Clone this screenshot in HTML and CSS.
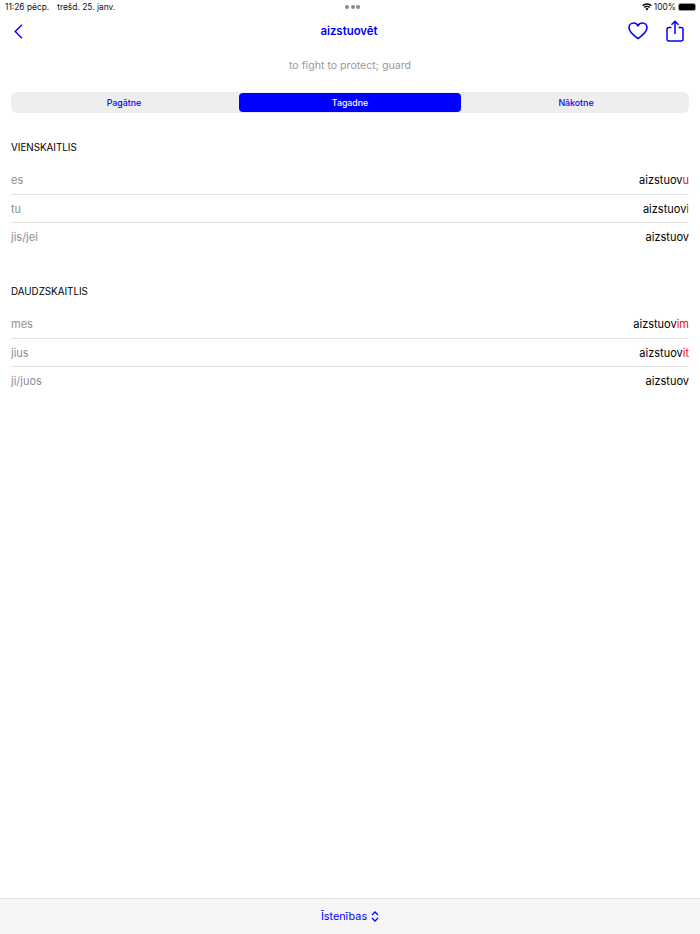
FILE: index.html
```html
<!DOCTYPE html>
<html lang="lv">
<head>
    <meta charset="UTF-8">
    <meta name="viewport" content="width=device-width, initial-scale=1.0">
    <title>aizstuovēt</title>
    <link rel="stylesheet" href="styles.css">
</head>
<body>
    <div class="status-bar">
        <div class="status-left"><span>11:26 pēcp.</span><span>trešd. 25. janv.</span></div>
        <div class="status-dots"><i></i><i></i><i></i></div>
        <div class="status-right">
            <svg class="wifi" viewBox="0 0 12 9" width="10" height="8">
                <path d="M6 8.600 4.200 6.700a2.600 2.600 0 0 1 3.600 0z" fill="#000"/>
                <path d="M3.300 5.800 2.200 4.600a5.400 5.400 0 0 1 7.600 0L8.700 5.800a3.900 3.900 0 0 0-5.400 0z" fill="#000"/>
                <path d="M1.300 3.700.2 2.500a8.200 8.200 0 0 1 11.600 0l-1.100 1.200a6.700 6.700 0 0 0-9.400 0z" fill="#000"/>
            </svg>
            <span>100%</span>
            <div class="battery"><div class="battery-level"></div></div>
        </div>
    </div>

    <div class="nav-bar">
        <svg class="nav-back" viewBox="0 0 9 15" width="9" height="15">
            <path d="M8 .8 1.200 7.500 8 14.200" fill="none" stroke="#0000ff" stroke-width="1.400"/>
        </svg>
        <div class="nav-title">aizstuovēt</div>
        <div class="nav-actions">
            <svg viewBox="0 0 20 18" width="20" height="18">
                <path d="M10 16.600C5.500 13.400 1 10 1 5.800 1 3 3.100 1 5.600 1 7.500 1 9.100 2 10 3.800 10.900 2 12.500 1 14.400 1 16.900 1 19 3 19 5.800c0 4.200-4.500 7.600-9 10.800z" fill="none" stroke="#0000ff" stroke-width="1.600" stroke-linejoin="round"/>
            </svg>
            <svg viewBox="0 0 18 22" width="18" height="22">
                <path d="M5.500 7.500H3A2 2 0 0 0 1 9.500V19a2 2 0 0 0 2 2h12a2 2 0 0 0 2-2V9.500a2 2 0 0 0-2-2h-2.500" fill="none" stroke="#0000ff" stroke-width="1.500"/>
                <path d="M9 14V1.200M5.500 4.700 9 1.200l3.500 3.500" fill="none" stroke="#0000ff" stroke-width="1.500"/>
            </svg>
        </div>
    </div>

    <div class="translation">to fight to protect; guard</div>

    <div class="segments">
        <div class="segment">Pagātne</div>
        <div class="segment active">Tagadne</div>
        <div class="segment">Nākotne</div>
    </div>

    <div class="section">
        <h2>VIENSKAITLIS</h2>
        <div class="row"><span class="pronoun">es</span><span class="form">aizstuov<em>u</em></span></div>
        <div class="row"><span class="pronoun">tu</span><span class="form">aizstuov<em>i</em></span></div>
        <div class="row"><span class="pronoun">jis/jei</span><span class="form">aizstuov</span></div>
    </div>

    <div class="section">
        <h2>DAUDZSKAITLIS</h2>
        <div class="row"><span class="pronoun">mes</span><span class="form">aizstuov<em>im</em></span></div>
        <div class="row"><span class="pronoun">jius</span><span class="form">aizstuov<em>it</em></span></div>
        <div class="row"><span class="pronoun">ji/juos</span><span class="form">aizstuov</span></div>
    </div>

    <div class="toolbar">
        <span>Īstenības</span>
        <svg viewBox="0 0 8 11" width="8" height="11">
            <path d="M1 4 4 1l3 3M1 7l3 3 3-3" fill="none" stroke="#0000ff" stroke-width="1.300"/>
        </svg>
    </div>
</body>
</html>
```

FILE: styles.css
```css
html, body {
    height: 100%;
}

body {
    margin: 0;
    display: flex;
    flex-direction: column;
    font-family: Inter, "Liberation Sans", sans-serif;
    background: #fff;
    color: #000;
}

.status-bar {
    height: 13px;
    padding-left: 5px;
    display: grid;
    grid-template-columns: 1fr auto 1fr;
    align-items: center;
    font-size: 8.400px;
    color: #111;
}

.status-left {
    display: flex;
    gap: 8px;
}

.status-dots {
    display: flex;
    gap: 1.500px;
}

.status-dots i {
    width: 4px;
    height: 4px;
    border-radius: 50%;
    background: #8a8a8a;
}

.status-right {
    display: flex;
    justify-content: flex-end;
    align-items: center;
    gap: 2px;
    padding-right: 4px;
}

.battery {
    width: 18px;
    height: 8px;
    padding: 1px;
    box-sizing: border-box;
    border-radius: 2.500px;
    background: #999;
}

.battery-level {
    height: 100%;
    border-radius: 1.500px;
    background: #000;
}

.nav-bar {
    height: 36px;
    padding: 0 16px 0 14px;
    display: grid;
    grid-template-columns: 1fr auto 1fr;
    align-items: center;
}

.nav-back {
    display: block;
}

.nav-title {
    font-size: 11.400px;
    font-weight: 600;
    color: #0000ff;
}

.nav-actions {
    display: flex;
    justify-content: flex-end;
    align-items: center;
    gap: 18px;
}

.translation {
    margin-top: 9px;
    text-align: center;
    font-size: 10.600px;
    line-height: 16px;
    color: #999;
}

.segments {
    margin: 18px 11px 0;
    height: 21px;
    display: grid;
    grid-template-columns: repeat(3, 1fr);
    background: #eeeeee;
    border-radius: 6px;
}

.segment {
    margin: 1px 2px;
    display: flex;
    align-items: center;
    justify-content: center;
    font-size: 8.800px;
    font-weight: 500;
    color: #0000ff;
    border-radius: 4px;
}

.segment.active {
    background: #0000ff;
    color: #fff;
}

.section {
    margin: 0 11px;
    padding-top: 28px;
    height: 116px;
}

.section h2 {
    margin: 0;
    height: 25.300px;
    font-size: 9.800px;
    line-height: 13px;
    font-weight: 400;
    color: #000;
}

.row {
    height: 28.500px;
    box-sizing: border-box;
    display: flex;
    justify-content: space-between;
    align-items: center;
    font-size: 11px;
    border-bottom: 1px solid #e4e4e4;
}

.row:last-child {
    border-bottom-color: transparent;
}

.pronoun {
    color: #8e8e8e;
}

.form em {
    font-style: normal;
    color: #f01020;
}

.toolbar {
    margin-top: auto;
    height: 36px;
    box-sizing: border-box;
    display: flex;
    align-items: center;
    justify-content: center;
    gap: 4px;
    background: #f6f6f6;
    border-top: 1px solid #e2e2e2;
    font-size: 10.800px;
    color: #0000ff;
}
```
